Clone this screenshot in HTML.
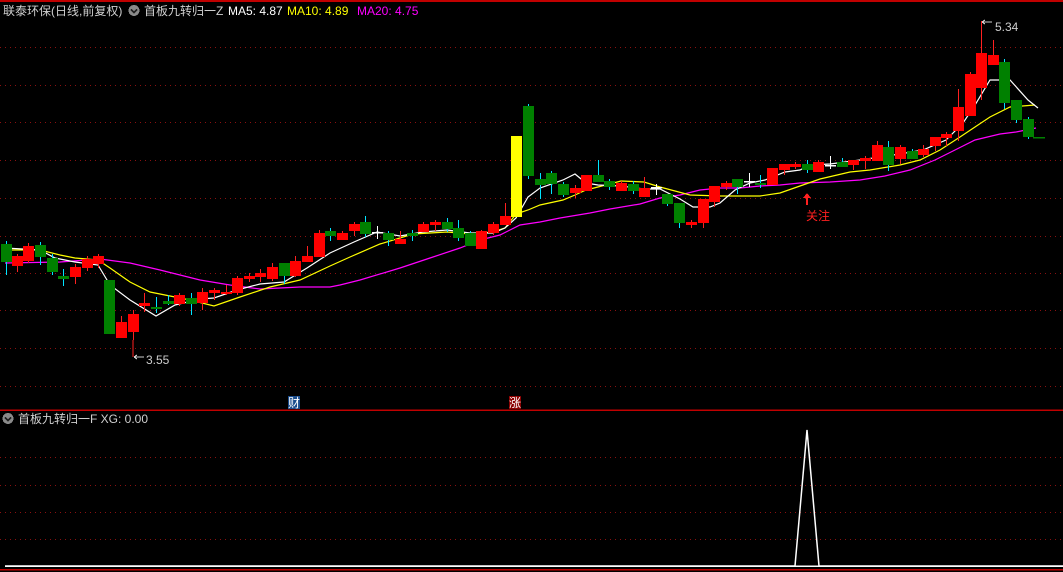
<!DOCTYPE html>
<html><head><meta charset="utf-8"><style>
html,body{margin:0;padding:0;background:#000;width:1063px;height:572px;overflow:hidden}
svg{display:block}
text{font-family:"Liberation Sans","Noto Sans CJK SC",sans-serif;font-size:12px}
</style></head><body>
<svg id="s" width="1063" height="572" viewBox="0 0 1063 572" xmlns="http://www.w3.org/2000/svg" shape-rendering="crispEdges">
<rect width="1063" height="572" fill="#000"/>
<line x1="0" y1="1" x2="1063" y2="1" stroke="#c00000" stroke-width="2"/>
<g id="grid" stroke="#8a1010" stroke-width="1" stroke-dasharray="1,4"></g>
<line x1="0" y1="410" x2="1063" y2="410" stroke="#c00000" stroke-width="1.5"/>
<line x1="5" y1="566" x2="1063" y2="566" stroke="#fff" stroke-width="1.5"/>
<line x1="0" y1="569.5" x2="1063" y2="569.5" stroke="#c00000" stroke-width="1.5"/>
<g id="ma" fill="none" stroke-width="1.2" shape-rendering="auto"></g>
<g id="cd"></g>
<polyline points="5,566 795,566 807,430 819,566 1063,566" fill="none" stroke="#fff" stroke-width="1.5" shape-rendering="auto"/>
<!-- header -->
<text x="3" y="15" fill="#d0d0d0">联泰环保(日线,前复权)</text>
<circle cx="134" cy="10.5" r="5.5" fill="#8a8a8a"/><path d="M131 9.5l3 3 3-3" stroke="#222" stroke-width="1.5" fill="none"/>
<text x="144" y="15" fill="#d0d0d0">首板九转归一Z</text>
<text x="228" y="15" fill="#fff">MA5: 4.87</text>
<text x="287" y="15" fill="#ffff00">MA10: 4.89</text>
<text x="357" y="15" fill="#ff00ff">MA20: 4.75</text>
<circle cx="8" cy="418.5" r="5.5" fill="#8a8a8a"/><path d="M5 417.5l3 3 3-3" stroke="#222" stroke-width="1.5" fill="none"/>
<text x="18" y="423" fill="#d0d0d0">首板九转归一F  XG: 0.00</text>
<!-- annotations -->
<line x1="133" y1="340" x2="133" y2="357" stroke="#ff2020"/>
<path d="M134 357h10M134 357l3-2M134 357l3 2" stroke="#ccc" fill="none"/>
<text x="146" y="364" fill="#ccc">3.55</text>
<path d="M982 22h10M982 22l3-2M982 22l3 2" stroke="#ccc" fill="none"/>
<text x="995" y="31" fill="#ccc">5.34</text>
<path d="M807 193l-4 5h3v7h2v-7h3z" fill="#ff2020"/>
<text x="806" y="220" fill="#ff2020">关注</text>
<rect x="288" y="396" width="12" height="13" fill="#1a4c8c"/><text x="288" y="407" fill="#fff" font-size="11">财</text>
<rect x="509" y="396" width="12" height="13" fill="#8b0000"/><text x="509" y="407" fill="#fff" font-size="11">涨</text>
</svg>
<script>
var NS="http://www.w3.org/2000/svg";
function el(p,t,a){var e=document.createElementNS(NS,t);for(var k in a)e.setAttribute(k,a[k]);p.appendChild(e);return e;}
var g=document.getElementById('grid');
[47,85,122,160,198,236,273,310,348,386,457,485,512,539].forEach(function(y){el(g,'line',{x1:0,y1:y+.5,x2:1063,y2:y+.5});});
var ma=document.getElementById('ma');
var m20="5,263 60,262 100,259 130,263 160,270 200,280 230,285 260,289 300,287 330,287 340,285 360,280 400,268 430,258 460,248 480,240 500,235 510,230 520,225 540,222 560,218 590,213 610,209 640,204 660,198 680,195 700,190 720,188 740,188 760,186 780,185 800,183 830,182 860,180 885,176 910,170 935,160 955,150 975,140 1000,134 1016,132 1036,128";
var m10="5,250 40,250 60,255 75,258 98,260 110,268 130,282 150,292 170,296 190,300 214,306 240,297 270,287 300,280 330,266 350,257 380,244 413,234 447,232 470,234 493,232 505,228 516,214 528,210 540,205 563,200 575,195 586,190 598,187 621,181 644,182 660,187 690,195 720,196 760,196 780,193 800,186 820,179 850,172 870,170 900,165 920,160 940,150 960,137 990,117 1010,107 1035,105";
var m5="5,248 40,250 55,258 75,262 98,265 110,285 130,300 156,316 175,305 200,299 214,298 237,290 260,284 284,282 307,268 330,253 354,242 377,232 400,236 423,232 447,230 470,233 493,233 505,228 516,218 528,197 540,188 563,180 575,174 586,183 598,185 621,186 644,189 660,189 680,199 693,207 710,207 720,203 735,190 750,183 765,180 785,172 800,170 810,165 830,164 860,160 880,157 900,154 923,150 946,140 963,123 975,105 990,80 1010,80 1028,100 1038,108";
el(ma,'polyline',{points:m20,stroke:'#ff00ff'});
el(ma,'polyline',{points:m10,stroke:'#ffff00'});
el(ma,'polyline',{points:m5,stroke:'#ffffff'});
var C=[[6,244,262,241,275,'g'],[17,256,266,254,272,'r'],[28,246,261,243,263,'r'],[40,245,257,242,265,'g'],[52,258,272,254,275,'g'],[63,276,279,269,286,'g'],[75,267,277,264,284,'r'],[87,259,268,256,271,'r'],[98,256,264,254,268,'r'],[109,280,334,280,334,'g'],[121,322,338,316,338,'r'],[133,314,332,310,340,'r'],[144,303,306,293,312,'r'],[156,307,309,297,313,'g'],[168,301,304,295,305,'g'],[179,295,304,293,306,'r'],[191,298,304,293,315,'g'],[202,292,303,288,310,'r'],[214,290,293,288,300,'r'],[226,292,294,285,295,'r'],[237,278,293,276,295,'r'],[249,276,279,273,282,'r'],[260,273,277,269,282,'r'],[272,267,279,263,281,'r'],[284,263,276,263,284,'g'],[295,261,276,256,277,'r'],[307,256,262,246,262,'r'],[319,233,257,230,257,'r'],[330,231,236,228,241,'g'],[342,233,240,231,240,'r'],[354,224,231,222,236,'r'],[365,222,234,216,237,'g'],[377,232,233,226,239,'x'],[388,233,240,231,246,'g'],[400,239,244,231,244,'r'],[412,233,236,230,241,'g'],[423,224,232,222,232,'r'],[435,222,225,220,231,'r'],[447,222,229,218,232,'g'],[458,228,238,220,241,'g'],[470,233,246,231,246,'g'],[481,231,249,230,249,'r'],[493,224,233,222,235,'r'],[505,216,225,203,225,'r'],[516,136,217,136,217,'y'],[528,106,176,104,179,'g'],[540,179,185,173,199,'g'],[551,173,184,171,194,'g'],[563,184,195,182,197,'g'],[575,188,193,185,198,'r'],[586,175,191,175,191,'r'],[598,175,182,160,182,'g'],[609,181,187,179,190,'g'],[621,183,191,181,191,'r'],[633,184,191,181,194,'g'],[644,188,197,177,197,'r'],[656,187,188,184,195,'x'],[667,194,204,194,206,'g'],[679,203,223,203,228,'g'],[691,222,225,220,228,'r'],[703,199,223,199,228,'r'],[714,186,202,186,207,'r'],[726,183,187,181,190,'r'],[737,179,187,179,194,'g'],[749,181,182,173,187,'x'],[760,183,185,175,188,'g'],[772,168,185,168,185,'r'],[784,164,170,164,175,'r'],[795,164,167,162,169,'r'],[807,164,170,160,173,'g'],[818,162,172,160,172,'r'],[830,165,166,156,169,'x'],[842,162,167,158,167,'g'],[853,160,165,160,170,'r'],[865,158,161,156,169,'r'],[877,145,161,141,161,'r'],[888,147,165,141,171,'g'],[900,147,159,145,164,'r'],[912,151,159,149,159,'g'],[923,149,155,145,157,'r'],[935,137,146,137,151,'r'],[946,134,138,132,146,'r'],[958,107,131,89,141,'r'],[970,74,116,72,116,'r'],[981,53,88,21,100,'r'],[993,55,65,40,65,'r'],[1004,62,103,59,109,'g'],[1016,100,120,100,123,'g'],[1028,119,137,117,139,'g']];
var cd=document.getElementById('cd');
var col={r:'#ff0000',g:'#008000',y:'#ffff00',x:'#ffffff'},wk={r:'#ff2020',g:'#00e5ff',y:'#ffff00',x:'#ffffff'};
C.forEach(function(c){
 el(cd,'line',{x1:c[0]+.5,y1:c[3],x2:c[0]+.5,y2:c[4],stroke:wk[c[5]]});
 var h=Math.max(c[2]-c[1],1.5);
 el(cd,'rect',{x:c[0]-5,y:c[1],width:11,height:h,fill:col[c[5]]});
});
el(cd,'line',{x1:1033,y1:137.5,x2:1045,y2:137.5,stroke:'#008000','stroke-width':1.5});
</script>
</body></html>
